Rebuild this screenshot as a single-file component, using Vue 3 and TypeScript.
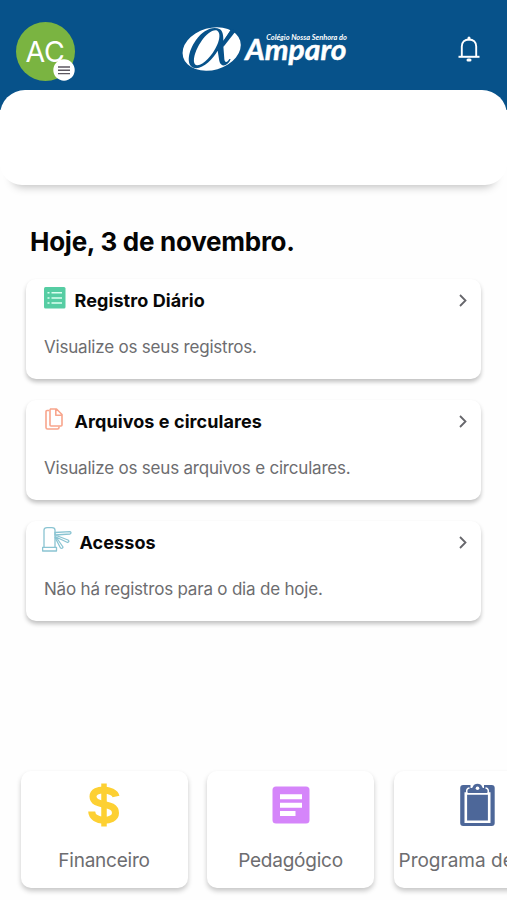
<script setup lang="ts">
interface Entry {
  id: 'list' | 'files' | 'gate'
  title: string
  text: string
}
interface Shortcut {
  id: 'money' | 'article' | 'clipboard'
  label: string
}

const entries: Entry[] = [
  { id: 'list', title: 'Registro Diário', text: 'Visualize os seus registros.' },
  { id: 'files', title: 'Arquivos e circulares', text: 'Visualize os seus arquivos e circulares.' },
  { id: 'gate', title: 'Acessos', text: 'Não há registros para o dia de hoje.' },
]
const shortcuts: Shortcut[] = [
  { id: 'money', label: 'Financeiro' },
  { id: 'article', label: 'Pedagógico' },
  { id: 'clipboard', label: 'Programa de' },
]
</script>

<template>
  <div class="screen">
    <header class="topbar">
      <button class="avatar" aria-label="Menu">
        <span>AC</span>
        <svg class="burger" viewBox="0 0 22 22">
          <circle cx="11" cy="11" r="10.7" fill="#fff" />
          <path d="M5 8h12M5 11.3h12M5 14.6h12" stroke="#5c5760" stroke-width="1.4" />
        </svg>
      </button>
      <svg class="logo" viewBox="0 0 570 240">
        <ellipse cx="125" cy="117" rx="89" ry="63" transform="rotate(-16 125 117)" fill="#fff" />
        <path d="M150 58C128 46 98 62 78 90C54 124 48 164 70 173C94 182 128 148 143 122L148 153C152 172 172 171 182 148L178 147C171 160 164 158 163 147L160 108C170 92 181 78 191 60L184 57L160 92C160 74 158 64 150 58ZM142 62C151 68 150 86 141 106C126 140 94 172 78 165C65 158 74 122 95 92C110 71 130 56 142 62Z" fill="#07528a" fill-rule="evenodd" />
        <path d="M184 57L197 64L160 111L158 98Z" fill="#07528a" />
        <text x="289" y="89" class="logo-small" textLength="242" lengthAdjust="spacingAndGlyphs">Colégio Nossa Senhora do</text>
        <text x="226" y="149" class="logo-name" textLength="303" lengthAdjust="spacingAndGlyphs">Amparo</text>
      </svg>
      <svg class="bell" viewBox="0 0 22 27" fill="none" stroke="#fff">
        <path d="M3.800 20.500V10.500C3.800 6 6.800 3.500 11 3.500S18.200 6 18.200 10.500V20.500" stroke-width="1.900" />
        <path d="M.5 20.800h21" stroke-width="2" />
        <path d="M11 3V2M10 24h2" stroke-width="3" stroke-linecap="round" />
      </svg>
    </header>

    <section class="panel"></section>

    <main>
      <h1>Hoje, 3 de novembro.</h1>
      <article v-for="entry in entries" :key="entry.id" class="card">
        <div class="card-head">
          <svg v-if="entry.id === 'list'" class="icon-list" viewBox="0 0 22 22">
            <rect width="21.500" height="21.500" rx="1.500" fill="#56cda3" />
            <path d="M3.500 5.700h2M3.500 10.900h2M3.500 16.100h2M7.500 5.700H18M7.500 10.900H18M7.500 16.100H18" stroke="#dcfff1" stroke-width="1.500" />
          </svg>
          <svg v-else-if="entry.id === 'files'" class="icon-files" viewBox="0 0 18 22" fill="none" stroke="#f8a58c" stroke-width="1.600" stroke-linejoin="round">
            <path d="M5 1h6.500L17 6.500V17q0 1-1 1H6q-1 0-1-1V2q0-1 1-1M10.800 1v6.200H17" />
            <path d="M4 2.500H2Q1 2.500 1 3.500V19.500Q1 21 2.500 21H12.500Q14 21 14 19.500V18.500" />
          </svg>
          <svg v-else class="icon-gate" viewBox="0 0 30 25" fill="none" stroke="#8ac4d2" stroke-width="1.300" stroke-linejoin="round">
            <path d="M2 20V3Q2 .7 5 .7H10Q13 .7 13 3V20M.6 20.300H14.500V24H.6Z" />
            <path d="M13 5.500L28 4.600Q30 5.700 28 7L13 8ZM13 8L26 13Q28 14.500 25.500 15.500L13 9.500M14 10L21 20Q20.500 22 18.500 21L12.800 10" />
          </svg>
          <h2>{{ entry.title }}</h2>
          <svg class="chevron" viewBox="0 0 8 13" fill="none" stroke="#66666b" stroke-width="1.800">
            <path d="M1 1l5.500 5.500L1 12" />
          </svg>
        </div>
        <p>{{ entry.text }}</p>
      </article>
    </main>

    <nav class="shortcuts">
      <a v-for="item in shortcuts" :key="item.id" class="tile" :class="item.id">
        <svg v-if="item.id === 'money'" class="tile-icon" viewBox="0 0 40 44" fill="none" stroke="#fdd032">
          <path d="M20 .5V43.500" stroke-width="5.500" />
          <path d="M32 13.500C30.500 5.500 9 4 9 13.500C9 24.500 31.500 18 31.500 30C31.500 40 8 40 7.700 28.500" stroke-width="7" />
        </svg>
        <svg v-else-if="item.id === 'article'" class="tile-icon" viewBox="0 0 40 44">
          <rect x="1.500" y="3.500" width="37" height="37" rx="3.500" fill="#d585fa" />
          <path d="M9 13.800H31M9 22.200H31M9 30.600H24.500" stroke="#fff" stroke-width="5" />
        </svg>
        <svg v-else class="tile-icon" viewBox="0 0 40 44">
          <rect x="3.200" y="2" width="34.500" height="41" rx="3" fill="#4d6799" />
          <path d="M8.800 10.500H32.200V38.800H8.800Z" fill="#4d6799" stroke="#fff" stroke-width="2.600" />
          <path d="M13.500 1H27V5H13.500Z" fill="#fff" />
          <path d="M10.500 10V8Q11 6 13.500 5.800Q15.500 5.500 16 3.500Q17 .8 20.500 .8T25 3.500Q25.500 5.500 27.500 5.800Q30 6 30.500 8V10Z" fill="#4d6799" />
          <path d="M9.700 10V7.500Q10 5.300 12.500 5M31.300 10V7.500Q31 5.300 28.500 5" fill="none" stroke="#fff" stroke-width="1.500" />
          <circle cx="20.500" cy="5.200" r="1.800" fill="#fff" />
        </svg>
        <span>{{ item.label }}</span>
      </a>
    </nav>
  </div>
</template>

<style>
body {
  overflow: hidden;
}
</style>

<style scoped>
.screen {
  display: flex;
  flex-direction: column;
  width: 507px;
  height: 900px;
  overflow: hidden;
  background: linear-gradient(#07528a 110px, #fefefe 110px);
  font-family: Inter, "Liberation Sans", sans-serif;
}
.topbar {
  display: grid;
  grid-template-columns: 154px 1fr 66px;
  height: 90px;
  flex: none;
}
.avatar {
  position: relative;
  width: 59px;
  height: 59px;
  margin: 21.500px 0 0 15.500px;
  padding: 0;
  border: 0;
  border-radius: 50%;
  background: #7ab441;
  color: #fff;
  font: 400 28.500px/59px Inter, sans-serif;
  letter-spacing: -0.300px;
}
.burger {
  position: absolute;
  right: 0;
  bottom: 0;
  width: 22px;
  height: 22px;
}
.logo {
  width: 190px;
  height: 80px;
  margin: 10px 0 0 16px;
}
.logo-name {
  font: italic 700 88px Lato, sans-serif;
  fill: #fff;
  stroke: #fff;
  stroke-width: 1.500px;
}
.logo-small {
  font: italic 700 21px Lato, sans-serif;
  fill: #fff;
}
.bell {
  width: 22px;
  height: 27px;
  margin: 36px 0 0 16.500px;
}
.panel {
  height: 95px;
  flex: none;
  border-radius: 25px 25px 22px 22px;
  background: #fff;
  box-shadow: 0 14px 9px -12px rgba(0, 0, 0, 0.25);
}
main {
  padding: 39px 26px 0;
}
h1 {
  margin: 0 0 19px 4px;
  font-size: 26px;
  line-height: 36px;
  font-weight: 700;
  letter-spacing: -0.260px;
  color: #050505;
}
.card {
  box-sizing: border-box;
  height: 100px;
  margin-bottom: 21px;
  padding: 8px 14px 0 17px;
  border-radius: 10px;
  background: #fff;
  box-shadow: 0 3px 4px rgba(0, 0, 0, 0.24);
}
.card-head {
  display: flex;
  align-items: flex-start;
  height: 48px;
}
.icon-list {
  width: 22px;
  height: 22px;
  margin: -0.500px 8.500px 0 1px;
}
.icon-files {
  width: 18px;
  height: 22px;
  margin: -0.500px 11.500px 0 2px;
}
.icon-gate {
  width: 30px;
  height: 25px;
  margin: -2px 7.500px 0 -1px;
}
h2 {
  flex: 1;
  margin: 0;
  font-size: 18px;
  line-height: 27px;
  font-weight: 700;
  letter-spacing: 0.080px;
  color: #080808;
}
.chevron {
  width: 8px;
  height: 13px;
  margin: 7px 0 0;
}
.card p {
  margin: 0;
  padding-left: 1px;
  font-size: 17px;
  line-height: 25px;
  letter-spacing: -0.200px;
  color: #6d6d70;
}
.shortcuts {
  display: flex;
  gap: 19.500px;
  margin-top: auto;
  padding: 0 0 12px 20.500px;
}
.tile {
  display: flex;
  flex: none;
  flex-direction: column;
  align-items: center;
  box-sizing: border-box;
  width: 167px;
  height: 117px;
  padding-top: 12px;
  border-radius: 10px;
  background: #fff;
  box-shadow: 0 3px 5px rgba(0, 0, 0, 0.22);
}
.tile-icon {
  width: 40px;
  height: 44px;
}
.tile span {
  margin-top: 21px;
  font-size: 19px;
  line-height: 26px;
  letter-spacing: -0.230px;
  color: #6d6d70;
  white-space: nowrap;
}
.clipboard span {
  align-self: flex-start;
  padding-left: 5px;
  letter-spacing: 0;
}
</style>
